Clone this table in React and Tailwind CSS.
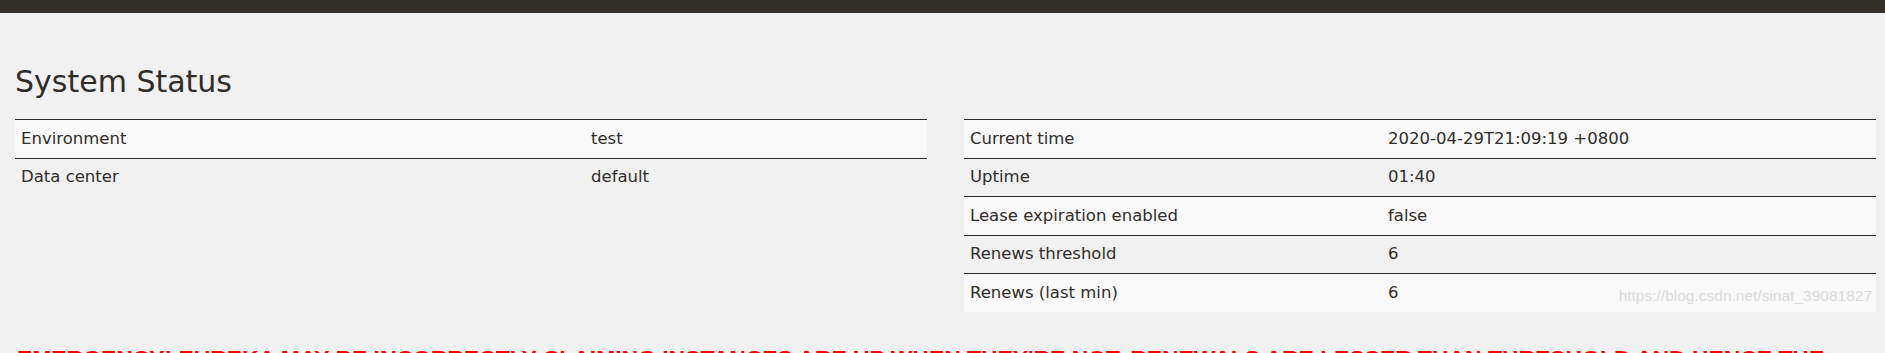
import React from "react";

// Left / right status tables
const general = [
  { label: "Environment", value: "test" },
  { label: "Data center", value: "default" },
];

const instance = [
  { label: "Current time", value: "2020-04-29T21:09:19 +0800" },
  { label: "Uptime", value: "01:40" },
  { label: "Lease expiration enabled", value: "false" },
  { label: "Renews threshold", value: "6" },
  { label: "Renews (last min)", value: "6" },
];

const StatusTable = ({ rows, labelWidth }) => (
  <div className="flex flex-col">
    {rows.map((row, i) => (
      <div
        key={row.label}
        className={`flex border-t border-[#2f2c29] ${
          i % 2 === 0 ? "bg-[#f9f9f9]" : "bg-transparent"
        }`}
      >
        <div className={`${labelWidth} shrink-0 px-[6px] py-[7.75px] leading-[22px]`}>
          {row.label}
        </div>
        <div className="flex-1 px-[6px] py-[7.75px] leading-[22px]">{row.value}</div>
      </div>
    ))}
  </div>
);

export default function App() {
  return (
    <div className="relative min-h-[353px] overflow-hidden bg-[#f1f1f1] text-[#302d2a] font-['DejaVu_Sans',sans-serif]">
      <div className="h-[13px] bg-[#322f2b]" />

      <section className="pl-[15px] pt-[51px]">
        <h1 className="text-[30px] leading-[36px] text-[#2f2c29]">System Status</h1>

        <div className="mt-[19px] grid grid-cols-[912px_912px] gap-[37px] text-[16.5px]">
          <StatusTable rows={general} labelWidth="w-[570px]" />
          <StatusTable rows={instance} labelWidth="w-[418px]" />
        </div>

        <h4 className="mt-[33px] pl-[2px] font-['Liberation_Sans',Arial,sans-serif] text-[22.9px] font-bold leading-[26px] text-[#ff0000]">
          EMERGENCY! EUREKA MAY BE INCORRECTLY CLAIMING INSTANCES ARE UP WHEN THEY'RE NOT.
          RENEWALS ARE LESSER THAN THRESHOLD AND HENCE THE INSTANCES ARE NOT BEING EXPIRED
          JUST TO BE SAFE.
        </h4>
      </section>

      {/* blog watermark */}
      <div className="absolute right-[13px] top-[287px] font-['Liberation_Sans',Arial,sans-serif] text-[15.5px] leading-[18px] text-[#dcdcdc]">
        https://blog.csdn.net/sinat_39081827
      </div>
    </div>
  );
}
